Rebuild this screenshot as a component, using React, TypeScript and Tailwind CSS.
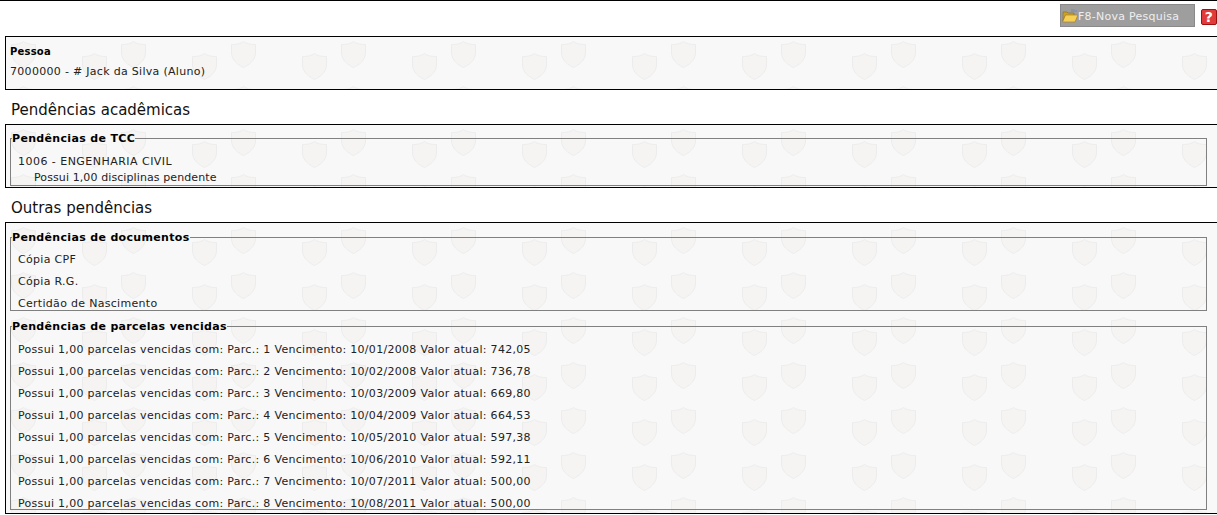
const watermark =
  "bg-[#f8f8f8] bg-[url('data:image/svg+xml,%3Csvg%20xmlns=%22http://www.w3.org/2000/svg%22%20width=%22110%22%20height=%2245%22%3E%3Cdefs%3E%3Cpath%20id=%22s%22%20d=%22M.5%203.5C6%203.5%2010%202.5%2012.5.5%2015%202.5%2019%203.5%2024.5%203.5V12C24.5%2019%2018%2024%2012.5%2026.5%207%2024%20.5%2019%20.5%2012Z%22%20fill=%22%23f5f4f3%22%20stroke=%22%23ececec%22/%3E%3C/defs%3E%3Cuse%20href=%22%23s%22%20x=%225%22%20y=%224%22/%3E%3Cuse%20href=%22%23s%22%20x=%2276%22%20y=%2216%22/%3E%3C/svg%3E')]";

const parcelas = [
  ["1", "10/01/2008", "742,05"],
  ["2", "10/02/2008", "736,78"],
  ["3", "10/03/2009", "669,80"],
  ["4", "10/04/2009", "664,53"],
  ["5", "10/05/2010", "597,38"],
  ["6", "10/06/2010", "592,11"],
  ["7", "10/07/2011", "500,00"],
  ["8", "10/08/2011", "500,00"],
];

const FolderIcon = () => (
  <svg width="16" height="15" viewBox="0 0 16 15" className="shrink-0">
    <path d="M9 1h3l1 1h2v2H9z" fill="#8a93a8" />
    <path d="M1 4h4l1 1h6v3H3l-2 5z" fill="#c9a227" stroke="#8a6a14" strokeWidth="0.6" />
    <path d="M0.5 14 3.5 7H16l-3 7z" fill="#f6cf57" stroke="#a97f1c" strokeWidth="0.7" />
  </svg>
);

const Row = ({ children }: { children: React.ReactNode }) => (
  <div className="h-[22px] pt-[8px] pl-[7px] leading-[16px]">{children}</div>
);

const Group = ({ title, children, className = "" }: { title: string; children: React.ReactNode; className?: string }) => (
  <fieldset className={`w-[1197px] ml-[4px] border border-[#808080] ${className}`}>
    <legend className="ml-[1px] h-[14px] text-[11px] leading-[16px] font-bold tracking-[0.33px] text-black">{title}</legend>
    {children}
  </fieldset>
);

const Heading = ({ children }: { children: React.ReactNode }) => (
  <h2 className="h-[34px] pl-[11px] pt-[10px] text-[15px] leading-[20px] tracking-normal text-[#111]">{children}</h2>
);

export default function App() {
  return (
    <div className="h-[515px] w-[1217px] overflow-hidden bg-white border-t border-black font-['DejaVu_Sans',sans-serif] text-[11px] tracking-[0.3px] text-[#222]">
      <div className="flex h-[35px] items-start justify-end">
        <button className="mt-[3px] flex h-[23px] w-[135px] items-center border border-[#8a8a8a] bg-[#9e9e9e] pl-[1px] text-[11px] tracking-[0.25px] text-[#eeeeee]">
          <FolderIcon />
          <span className="pt-[3px]">F8-Nova Pesquisa</span>
        </button>
        <div className="ml-[6px] mt-[8px] flex h-[16px] w-[16px] items-center justify-center rounded-[2px] border border-[#9c1010] bg-[#e03a3a] text-[14px] leading-none font-bold text-white">
          ?
        </div>
      </div>

      <section className={`ml-[5px] h-[54px] w-[1230px] border border-black pl-[4px] pt-[8px] ${watermark}`}>
        <div className="text-[10px] leading-[14px] font-bold tracking-[0.2px] text-black">Pessoa</div>
        <div className="mt-[5px] leading-[16px]">7000000 - # Jack da Silva (Aluno)</div>
      </section>

      <Heading>Pendências acadêmicas</Heading>

      <section className={`ml-[5px] h-[64px] w-[1230px] border border-black pt-[6px] ${watermark}`}>
        <Group title="Pendências de TCC">
          <div className="pl-[7px] pt-[9px] leading-[16px] tracking-[0.47px]">1006 - ENGENHARIA CIVIL</div>
          <div className="h-[15px] pl-[23px] leading-[16px] tracking-[0.1px]">Possui 1,00 disciplinas pendente</div>
        </Group>
      </section>

      <Heading>Outras pendências</Heading>

      <section className={`ml-[5px] h-[292px] w-[1230px] border border-black pt-[7px] ${watermark}`}>
        <Group title="Pendências de documentos">
          <Row>Cópia CPF</Row>
          <Row>Cópia R.G.</Row>
          <Row>Certidão de Nascimento</Row>
        </Group>
        <Group title="Pendências de parcelas vencidas" className="mt-[8px]">
          <div className="h-[176px] pt-[1px]">
            {parcelas.map(([parc, venc, valor]) => (
              <Row key={parc}>
                Possui 1,00 parcelas vencidas com: Parc.: {parc} Vencimento: {venc} Valor atual: {valor}
              </Row>
            ))}
          </div>
        </Group>
      </section>
    </div>
  );
}
